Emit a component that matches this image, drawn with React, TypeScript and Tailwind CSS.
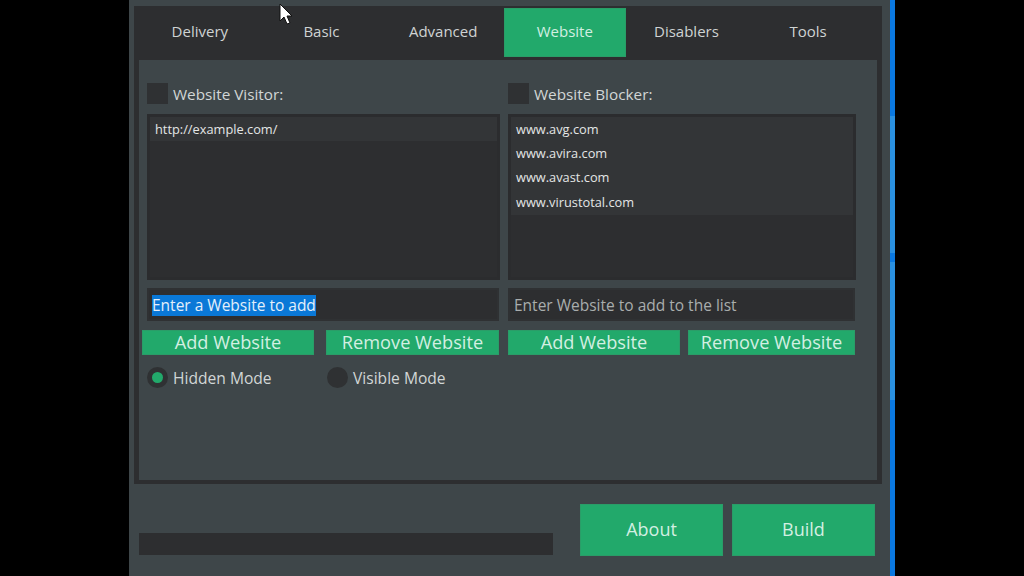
const font = 'font-["Open_Sans","Noto_Sans",sans-serif]';

const tabs = ['Delivery', 'Basic', 'Advanced', 'Website', 'Disablers', 'Tools'];

function GreenButton({ label, className }: { label: string; className: string }) {
  return (
    <button className={`flex items-center justify-center border border-[#2a9d68] bg-[#22a96b] text-[#d3efe2] ${className}`}>
      {label}
    </button>
  );
}

function CheckRow({ label }: { label: string }) {
  return (
    <div className="flex h-[21px] items-center gap-[5px] text-[15.3px] text-[#d2d6d6]">
      <div className="h-[21px] w-[21px] bg-[#2f3133]" />
      <span className="pt-[2px]">{label}</span>
    </div>
  );
}

function SiteList({ items, className }: { items: string[]; className: string }) {
  return (
    <div className={`mt-[10px] h-[166px] border-[3px] border-[#2b2c2e] bg-[#2d2e30] ${className}`}>
      <div className="bg-[#333537]">
        {items.map((item) => (
          <div key={item} className="flex h-[24.4px] items-center pl-[5px] text-[12.8px] text-[#e4e6e6]">
            {item}
          </div>
        ))}
      </div>
    </div>
  );
}

function Radio({ label, checked }: { label: string; checked?: boolean }) {
  return (
    <div className="flex h-[21px] w-[180px] shrink-0 items-center gap-[5px] text-[15.6px] text-[#d2d6d6]">
      <div className="flex h-[21px] w-[21px] items-center justify-center rounded-full bg-[#2f3133]">
        {checked && <div className="h-[11px] w-[11px] rounded-full bg-[#22a96b]" />}
      </div>
      <span className="pt-[3px]">{label}</span>
    </div>
  );
}

export default function App() {
  return (
    <div className={`flex h-[576px] w-[1024px] overflow-hidden bg-black ${font}`}>
      <div className="w-[129px] shrink-0" />
      <div className="flex h-full w-[761px] shrink-0 flex-col bg-[#3e4649] pt-[6px] pl-[5px]">
        <div className="h-[478px] w-[748px] bg-[#2d2e30] px-[5px] pt-[2px]">
          <div className="flex h-[49px]">
            {tabs.map((tab) => (
              <div
                key={tab}
                className={`flex w-[121.67px] items-center justify-center pb-[2px] text-[15px] ${
                  tab === 'Website' ? 'border border-[#2a9d68] bg-[#22a96b] text-[#d3efe2]' : 'text-[#cfd3d3]'
                }`}
              >
                {tab}
              </div>
            ))}
          </div>
          <div className="mt-[3px] h-[420px] w-[738px] bg-[#3e4649] pt-[23px] pl-[8px]">
            <div className="flex gap-[8px]">
              <div className="w-[353px]">
                <CheckRow label="Website Visitor:" />
                <SiteList items={['http://example.com/']} className="w-[353px]" />
                <div className="mt-[8px] flex h-[33px] w-[352px] items-center border-[2px] border-[#2f3133] bg-[#2d2e30] pl-[3px] text-[15.5px] text-[#d2d6d6]">
                  <span className="mt-px bg-[#0a78d7] leading-[21px] text-[#e4effa]">Enter a Website to add</span>
                </div>
                <div className="mt-[9px] -ml-[5px] flex gap-[12px] text-[18.2px]">
                  <GreenButton label="Add Website" className="h-[25px] w-[172px]" />
                  <GreenButton label="Remove Website" className="h-[25px] w-[173px]" />
                </div>
                <div className="mt-[12px] flex">
                  <Radio label="Hidden Mode" checked />
                  <Radio label="Visible Mode" />
                </div>
              </div>
              <div className="w-[348px]">
                <CheckRow label="Website Blocker:" />
                <SiteList items={['www.avg.com', 'www.avira.com', 'www.avast.com', 'www.virustotal.com']} className="w-[348px]" />
                <div className="mt-[8px] flex h-[33px] w-[347px] items-center border-[2px] border-[#2f3133] bg-[#2d2e30] pt-[2px] pl-[4px] text-[15.5px] text-[#a9adad]">
                  Enter Website to add to the list
                </div>
                <div className="mt-[9px] flex gap-[8px] text-[18.2px]">
                  <GreenButton label="Add Website" className="h-[25px] w-[172px]" />
                  <GreenButton label="Remove Website" className="h-[25px] w-[167px]" />
                </div>
              </div>
            </div>
          </div>
        </div>
        <div className="mt-[20px] flex items-end pl-[5px]">
          <div className="mb-[1px] h-[22px] w-[414px] bg-[#2d2e30]" />
          <GreenButton label="About" className="ml-[27px] h-[52px] w-[143px] pb-[2px] text-[18px]" />
          <GreenButton label="Build" className="ml-[9px] h-[52px] w-[143px] pb-[2px] text-[18px]" />
        </div>
      </div>
      {/* taskbar edge behind the window */}
      <div className="flex h-full w-[5px] shrink-0 flex-col">
        <div className="h-[116px] bg-[#0a78e0]" />
        <div className="h-[137px] bg-[#2a90e0]" />
        <div className="h-[9px] bg-[#0a78e0]" />
        <div className="h-[138px] bg-[#2a90e0]" />
        <div className="flex-1 bg-[#0a78e0]" />
      </div>
      <svg className="absolute top-[3px] left-[279px]" width="15" height="23" viewBox="0 0 15 23">
        <path d="M1 1 L1 18 L5 14 L8 21 L11 20 L8 13 L13 13 Z" fill="#fff" stroke="#111" strokeWidth="1" />
      </svg>
    </div>
  );
}
